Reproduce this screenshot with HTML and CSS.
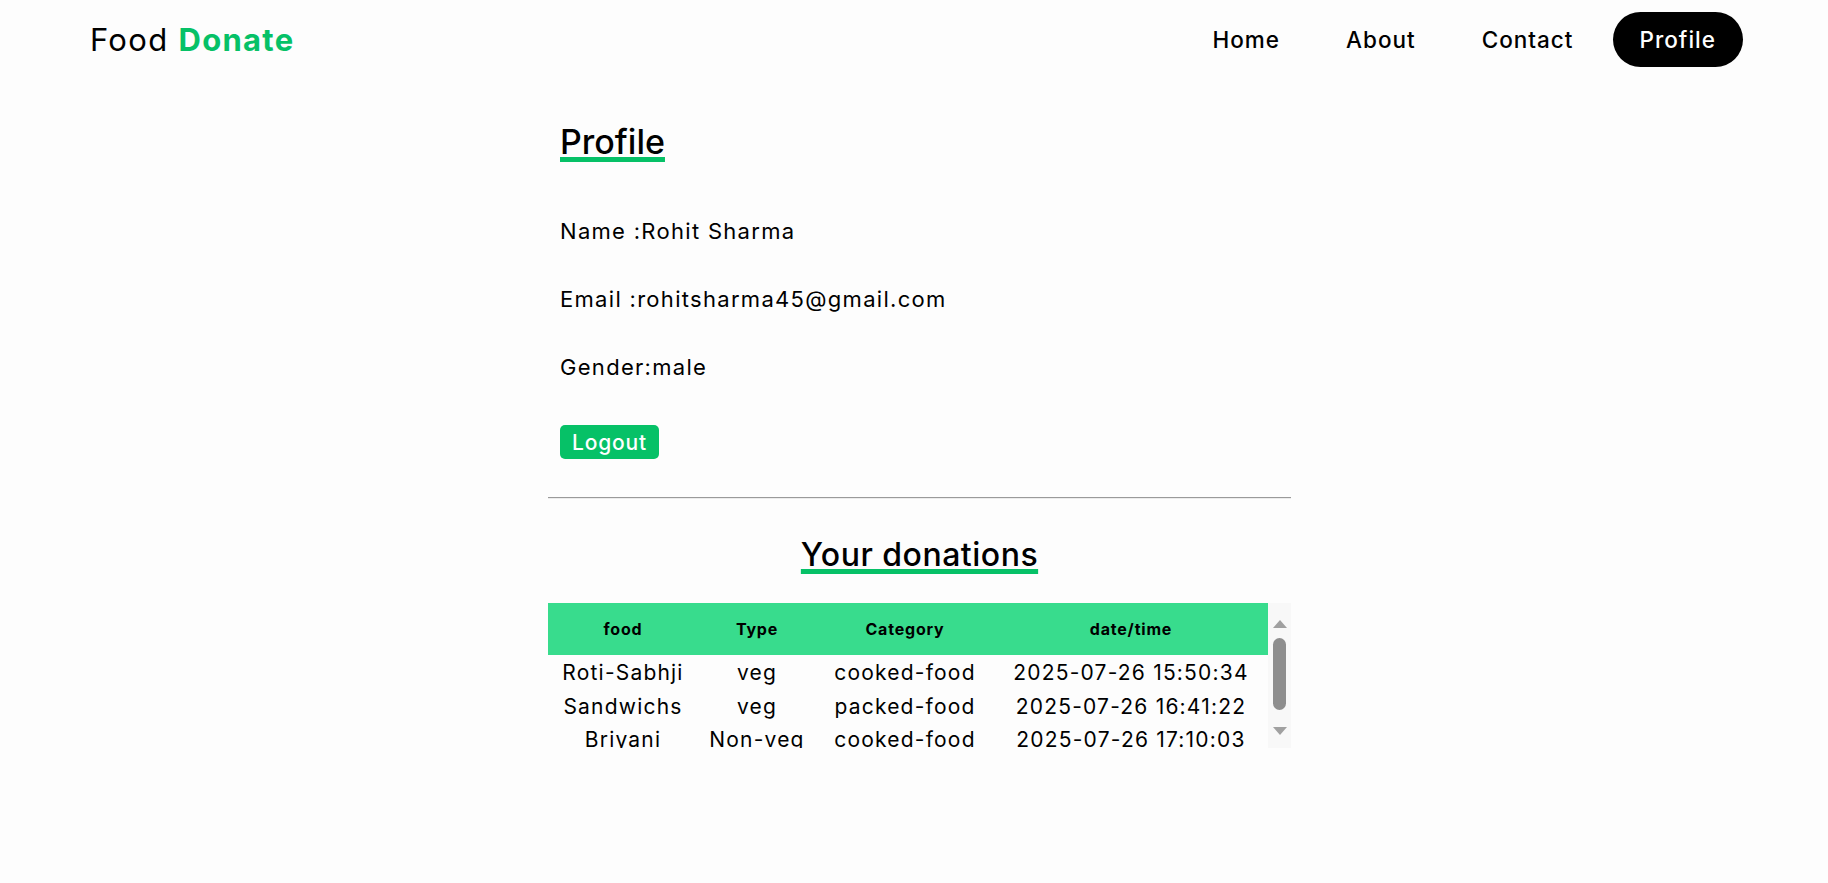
FILE: index.html
```html
<!DOCTYPE html>
<html lang="en">
<head>
<meta charset="utf-8">
<title>Food Donate - Profile</title>
<link rel="stylesheet" href="styles.css">
</head>
<body>
<header class="topbar">
  <div class="logo">Food <b>Donate</b></div>
  <nav class="nav">
    <a class="nav-link" href="#">Home</a>
    <a class="nav-link" href="#">About</a>
    <a class="nav-link" href="#">Contact</a>
    <a class="nav-link active" href="#">Profile</a>
  </nav>
</header>
<main class="content">
  <section class="profile">
    <h2 class="profile-title">Profile</h2>
    <p class="info first">Name :Rohit Sharma</p>
    <p class="info">Email :rohitsharma45@gmail.com</p>
    <p class="info">Gender:male</p>
    <button class="logout">Logout</button>
  </section>
  <hr class="divider">
  <h2 class="donations-title"><span>Your donations</span></h2>
  <div class="table-box">
    <div class="table-scroll">
      <table class="table">
        <colgroup>
          <col class="c1"><col class="c2"><col class="c3"><col class="c4">
        </colgroup>
        <thead>
          <tr><th>food</th><th>Type</th><th>Category</th><th>date/time</th></tr>
        </thead>
        <tbody>
          <tr><td>Roti-Sabhji</td><td>veg</td><td>cooked-food</td><td>2025-07-26 15:50:34</td></tr>
          <tr><td>Sandwichs</td><td>veg</td><td>packed-food</td><td>2025-07-26 16:41:22</td></tr>
          <tr><td>Briyani</td><td>Non-veg</td><td>cooked-food</td><td>2025-07-26 17:10:03</td></tr>
        </tbody>
      </table>
    </div>
    <div class="scrollbar">
      <span class="arrow up"></span>
      <span class="thumb"></span>
      <span class="arrow down"></span>
    </div>
  </div>
</main>
</body>
</html>
```
FILE: styles.css
```css
* { box-sizing: border-box; }
body {
  margin: 0;
  background: #fdfdfd;
  color: #000;
  font-family: Inter, "Open Sans", sans-serif;
}
.topbar {
  display: flex;
  justify-content: space-between;
  align-items: center;
  padding: 12px 85px 0 90px;
  height: 67px;
}
.logo {
  font-size: 31px;
  font-weight: 400;
  letter-spacing: 1.3px;
  line-height: 55px;
}
.logo b { color: #06c167; font-weight: 700; }
.nav { display: flex; gap: 12px; }
.nav-link {
  display: block;
  padding: 0 27px;
  height: 55px;
  line-height: 55px;
  font-size: 22.5px;
  font-weight: 500;
  letter-spacing: 1px;
  color: #000;
  text-decoration: none;
  border-radius: 28px;
}
.nav-link.active { background: #000; color: #fff; }
.content {
  width: 743px;
  margin-left: calc(50% - 366px);
}
.profile { padding-left: 12px; }
.profile-title {
  margin: 53px 0 0;
  font-size: 34px;
  line-height: 44px;
  font-weight: 500;
  text-decoration: underline;
  text-decoration-color: #06c167;
  text-decoration-thickness: 5px;
  text-underline-offset: 3px;
}
.info {
  margin: 40px 0 0;
  font-size: 22px;
  line-height: 28px;
  font-weight: 400;
  letter-spacing: 1.3px;
}
.info.first { margin-top: 53px; }
.logout {
  display: block;
  margin-top: 44px;
  height: 34px;
  padding: 0 12px;
  border: 0;
  border-radius: 5px;
  background: #06c167;
  color: #fff;
  font-family: inherit;
  font-size: 21px;
  font-weight: 500;
  letter-spacing: 0.8px;
}
.divider {
  margin: 38px 0 0;
  height: 0;
  border: 0;
  border-top: 1px solid #9a9a9a;
  border-bottom: 1px solid #ececec;
}
.donations-title {
  margin: 36px 0 0;
  text-align: center;
  font-size: 32px;
  line-height: 40px;
  font-weight: 500;
  letter-spacing: 0.5px;
}
.donations-title span {
  text-decoration: underline;
  text-decoration-color: #06c167;
  text-decoration-thickness: 5px;
  text-underline-offset: 3px;
}
.table-box {
  display: flex;
  margin-top: 28px;
  height: 145px;
}
.table-scroll {
  width: 720px;
  overflow: hidden;
}
.table {
  width: 720px;
  table-layout: fixed;
  border-collapse: collapse;
  border-spacing: 0;
}
.c1 { width: 150px; }
.c2 { width: 118px; }
.c3 { width: 178px; }
.c4 { width: 274px; }
.table th {
  height: 52px;
  padding: 0;
  background: #38dc8d;
  font-size: 16px;
  font-weight: 700;
  letter-spacing: 0.8px;
  text-align: center;
}
.table td {
  padding: 0;
  height: 33.5px;
  line-height: 33.5px;
  font-size: 21px;
  letter-spacing: 1.2px;
  text-align: center;
  white-space: nowrap;
}
.table tbody tr:first-child td { padding-top: 1px; }
.scrollbar {
  width: 23px;
  background: #f8f8f8;
  display: flex;
  flex-direction: column;
  align-items: center;
  padding: 17px 0 13px;
}
.arrow {
  width: 0;
  height: 0;
  border-left: 7px solid transparent;
  border-right: 7px solid transparent;
}
.arrow.up { border-bottom: 8px solid #a0a0a0; }
.arrow.down { border-top: 8px solid #a0a0a0; margin-top: auto; }
.thumb {
  margin-top: 10px;
  width: 13px;
  height: 72px;
  border-radius: 7px;
  background: #8e8e8e;
}
```
